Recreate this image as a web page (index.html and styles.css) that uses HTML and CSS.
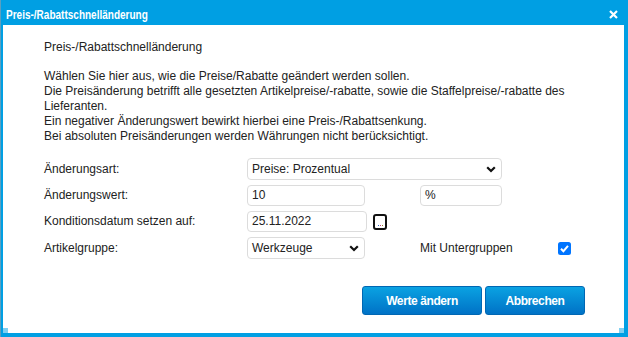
FILE: index.html
```html
<!DOCTYPE html>
<html lang="de">
<head>
<meta charset="utf-8">
<title>Preis-/Rabattschnelländerung</title>
<link rel="stylesheet" href="styles.css">
</head>
<body>
<div class="dialog">
  <div class="titlebar">
    <span class="title">Preis-/Rabattschnelländerung</span>
    <svg class="close" width="9" height="9" viewBox="0 0 9 9"><path d="M1 1 L8 8 M8 1 L1 8" stroke="#fff" stroke-width="2.2" fill="none"/></svg>
  </div>
  <div class="content">
    <div class="heading">Preis-/Rabattschnelländerung</div>
    <div class="info">
      Wählen Sie hier aus, wie die Preise/Rabatte geändert werden sollen.<br>
      Die Preisänderung betrifft alle gesetzten Artikelpreise/-rabatte, sowie die Staffelpreise/-rabatte des<br>
      Lieferanten.<br>
      Ein negativer Änderungswert bewirkt hierbei eine Preis-/Rabattsenkung.<br>
      Bei absoluten Preisänderungen werden Währungen nicht berücksichtigt.
    </div>
    <div class="form">
      <div class="label">Änderungsart:</div>
      <div class="field select wide"><span>Preise: Prozentual</span><svg width="10" height="7" viewBox="0 0 10 7"><path d="M1.2 1.2 L5 5 L8.8 1.2" stroke="#111" stroke-width="2.2" fill="none"/></svg></div>

      <div class="label">Änderungswert:</div>
      <div class="field col2">10</div>
      <div class="field col4">%</div>

      <div class="label">Konditionsdatum setzen auf:</div>
      <div class="datecell">
        <div class="field date">25.11.2022</div>
        <div class="dots"><i class="d1"></i><i class="d2"></i><i class="d3"></i></div>
      </div>

      <div class="label">Artikelgruppe:</div>
      <div class="field select col2"><span>Werkzeuge</span><svg width="10" height="7" viewBox="0 0 10 7"><path d="M1.2 1.2 L5 5 L8.8 1.2" stroke="#111" stroke-width="2.2" fill="none"/></svg></div>
      <div class="label sub">Mit Untergruppen</div>
      <div class="check"><svg width="13" height="13" viewBox="0 0 13 13"><rect x="0" y="0" width="13" height="13" rx="2.5" fill="#0075ff"/><path d="M3 6.8 L5.4 9.2 L10 3.8" stroke="#fff" stroke-width="2" fill="none"/></svg></div>
    </div>
    <div class="buttons">
      <button class="btn b1">Werte ändern</button>
      <button class="btn b2">Abbrechen</button>
    </div>
  </div>
  <i class="grip gl"></i>
  <i class="grip gr"></i>
</div>
</body>
</html>
```

FILE: styles.css
```css
html, body {
  margin: 0;
  padding: 0;
  background: #fff;
}
.dialog {
  position: relative;
  width: 628px;
  height: 337px;
  box-sizing: border-box;
  background: #009fe3;
  border-left: 1px solid #5a9fc0;
  display: flex;
  flex-direction: column;
  font-family: "Liberation Sans", Arial, sans-serif;
}
.titlebar {
  height: 25px;
  flex: none;
  display: flex;
  align-items: center;
  justify-content: space-between;
  padding: 1px 10px 0 5px;
  box-sizing: border-box;
}
.title {
  display: inline-block;
  color: #fff;
  font-weight: bold;
  font-size: 13px;
  padding-top: 2px;
  white-space: nowrap;
  transform: scaleX(0.77);
  transform-origin: left center;
}
.close {
  display: block;
  margin-top: 2px;
}
.content {
  flex: 1;
  background: #fff;
  margin: 0 4px 4px 2px;
  padding: 15px 39px 0 41px;
  color: #222;
  font-size: 12px;
  line-height: 15px;
}
.heading {
  margin-bottom: 14px;
}
.info {
  margin-bottom: 14px;
}
.form {
  display: grid;
  grid-template-columns: 203px 118px 55px 82px 56px 13px;
  grid-template-rows: 22px 21px 21px 22px;
  row-gap: 5px;
  align-items: center;
}
.label {
  grid-column: 1;
}
.label.sub {
  grid-column: 4 / span 2;
}
.field {
  height: 100%;
  box-sizing: border-box;
  border: 1px solid #dcdcdc;
  border-radius: 4px;
  padding: 0 6px 0 4px;
  display: flex;
  align-items: center;
  background: #fff;
}
.select {
  justify-content: space-between;
  padding-right: 5px;
}
.wide {
  grid-column: 2 / span 3;
}
.col2 {
  grid-column: 2;
}
.col4 {
  grid-column: 4;
}
.datecell {
  grid-column: 2 / span 2;
  height: 100%;
  display: flex;
  align-items: center;
  gap: 6px;
}
.date {
  width: 120px;
  flex: none;
}
.dots {
  width: 14px;
  height: 16px;
  box-sizing: border-box;
  border: 2px solid #111;
  border-radius: 3px;
  display: flex;
  align-items: flex-end;
  justify-content: center;
  gap: 1px;
  padding-bottom: 2px;
}
.dots i {
  width: 1px;
  height: 1px;
  display: block;
}
.d1 { background: #3060c0; }
.d2 { background: #c04080; }
.d3 { background: #a08020; }
.check {
  grid-column: 6;
  display: flex;
  align-items: center;
}
.check svg {
  display: block;
}
.buttons {
  display: flex;
  justify-content: flex-end;
  gap: 3px;
  margin-top: 27px;
}
.btn {
  height: 29px;
  border: 1px solid #0067b3;
  border-radius: 3px;
  background: linear-gradient(#0aa2e2, #0072c6);
  color: #fff;
  font-family: "Liberation Sans", Arial, sans-serif;
  font-weight: bold;
  font-size: 12px;
  letter-spacing: -0.4px;
  padding: 0;
}
.b1 { width: 120px; }
.b2 { width: 100px; }
.grip {
  position: absolute;
  bottom: 4px;
  width: 5px;
  height: 5px;
  background: #7fd0f2;
}
.gl { left: 2px; }
.gr { right: 4px; }
```
